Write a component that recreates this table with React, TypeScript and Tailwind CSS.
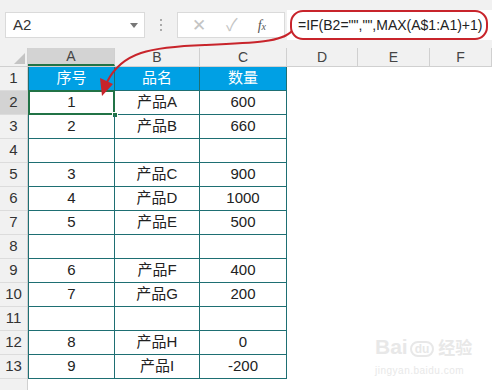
import React from "react";

const rows: [string, string, string][] = [
  ["1", "产品A", "600"],
  ["2", "产品B", "660"],
  ["", "", ""],
  ["3", "产品C", "900"],
  ["4", "产品D", "1000"],
  ["5", "产品E", "500"],
  ["", "", ""],
  ["6", "产品F", "400"],
  ["7", "产品G", "200"],
  ["", "", ""],
  ["8", "产品H", "0"],
  ["9", "产品I", "-200"],
];

const font = { fontFamily: '"Liberation Sans", "Noto Sans CJK SC", sans-serif' };

const cols = [
  { name: "A", w: "w-[87px]" },
  { name: "B", w: "w-[85px]" },
  { name: "C", w: "w-[87px]" },
  { name: "D", w: "w-[71px]" },
  { name: "E", w: "w-[72px]" },
  { name: "F", w: "w-[62px]" },
];

const App = () => {
  return (
    <div className="relative w-[492px] h-[390px] overflow-hidden bg-white text-[#222]" style={font}>
      {/* toolbar */}
      <div className="flex items-center h-[48px] bg-[#f1f1f1] pt-[2px]">
        <div className="ml-[5px] w-[140px] h-[26px] bg-white border border-[#dadada] flex items-center justify-between pl-[7px] pr-[6px]">
          <span className="text-[15px] text-[#333]">A2</span>
          <span className="w-0 h-0 border-l-[4px] border-r-[4px] border-t-[5px] border-l-transparent border-r-transparent border-t-[#777]" />
        </div>
        <div className="w-[32px] flex flex-col items-center gap-[3px]">
          <span className="w-[2px] h-[2px] bg-[#aaa]" />
          <span className="w-[2px] h-[2px] bg-[#aaa]" />
          <span className="w-[2px] h-[2px] bg-[#aaa]" />
        </div>
        <div className="w-[108px] h-[26px] bg-white border border-[#dadada] flex items-center text-[#c4c4c4]">
          <span className="ml-[14px] text-[17px] leading-none">✕</span>
          <span className="ml-[20px] text-[17px] leading-none">✓</span>
          <span className="ml-[20px] text-[14px] italic text-[#555]" style={{ fontFamily: '"Liberation Serif", serif' }}>
            f<span className="text-[10px]">x</span>
          </span>
        </div>
        <div className="ml-[2px] flex-1 h-[30px] bg-white flex items-center">
          <div className="ml-[3px] w-[198px] h-[30px] border-2 border-[#c8242b] rounded-[13px] flex items-center pl-[6px] text-[14px] text-[#222] whitespace-nowrap">
            =IF(B2="","",MAX(A$1:A1)+1)
          </div>
        </div>
      </div>

      {/* column headers */}
      <div className="flex h-[19px] bg-[#f1f1f1] border-b border-[#d0d0d0]">
        <div className="w-[28px] flex items-end justify-end pr-[2px] pb-[2px] border-r border-[#d0d0d0]">
          <span className="w-0 h-0 border-l-[11px] border-b-[11px] border-l-transparent border-b-[#c4c4c4]" />
        </div>
        {cols.map((c) => (
          <div
            key={c.name}
            className={`${c.w} flex items-center justify-center text-[14px] text-[#444] border-r border-[#d0d0d0] ${
              c.name === "A" ? "bg-[#d3d3d3] border-b-2 border-b-[#217346]" : ""
            }`}
          >
            {c.name}
          </div>
        ))}
      </div>

      {/* body */}
      <div className="flex">
        <div className="w-[28px] h-[330px] bg-[#f1f1f1] border-r border-[#d0d0d0] flex flex-col">
          {Array.from({ length: 13 }, (_, i) => (
            <div
              key={i}
              className={`h-[24px] shrink-0 flex items-end justify-center pb-[1px] text-[15px] text-[#333] border-b border-[#dcdcdc] ${
                i === 1 ? "bg-[#d3d3d3]" : ""
              }`}
            >
              {i + 1}
            </div>
          ))}
        </div>

        <div className="flex flex-col border-l border-[#1e6f73] self-start">
          <div className="flex h-[24px] bg-[#00a0e4] text-white text-[15px] border-b border-[#1e6f73]">
            <div className="w-[86px] flex items-center justify-center border-r border-[#1e6f73]">序号</div>
            <div className="w-[85px] flex items-center justify-center border-r border-[#1e6f73]">品名</div>
            <div className="w-[87px] flex items-center justify-center border-r border-[#1e6f73]">数量</div>
          </div>
          {rows.map((r, i) => (
            <div key={i} className="flex h-[24px] text-[15px] text-[#222] border-b border-[#1e6f73]">
              <div className="relative w-[86px] flex items-center justify-center border-r border-[#1e6f73]">
                {r[0]}
                {i === 0 && (
                  <>
                    <div className="absolute -left-[1px] -top-[1px] -right-[1px] -bottom-[1px] border-2 border-[#217346]" />
                    <div className="absolute -right-[4px] -bottom-[4px] w-[6px] h-[6px] bg-[#217346] border border-white" />
                  </>
                )}
              </div>
              <div className="w-[85px] flex items-center justify-center border-r border-[#1e6f73]">{r[1]}</div>
              <div className="w-[87px] flex items-center justify-center border-r border-[#1e6f73]">{r[2]}</div>
            </div>
          ))}
        </div>
      </div>

      {/* annotation arrow */}
      <svg className="absolute left-0 top-0 pointer-events-none" width="492" height="390">
        <path
          d="M292 31 C282 42 255 43 205 45 C150 47 122 52 107 82"
          fill="none"
          stroke="#c8242b"
          strokeWidth="2"
        />
        <path d="M100 78 L113 84 L102 96 Z" fill="#c8242b" />
      </svg>

      {/* watermark */}
      <div className="absolute left-[375px] top-[336px] flex flex-col items-start text-[#e8e8e8] whitespace-nowrap">
        <div className="flex items-end gap-[2px] leading-none">
          <span className="text-[21px] font-bold">Bai</span>
          <span className="px-[3px] rounded-full border-2 border-[#e8e8e8] text-[12px] font-bold">du</span>
          <span className="ml-[2px] text-[17px] font-bold">经验</span>
        </div>
        <span className="text-[10px] mt-[6px] tracking-[0.5px]">jingyan.baidu.com</span>
      </div>
    </div>
  );
};

export default App;
